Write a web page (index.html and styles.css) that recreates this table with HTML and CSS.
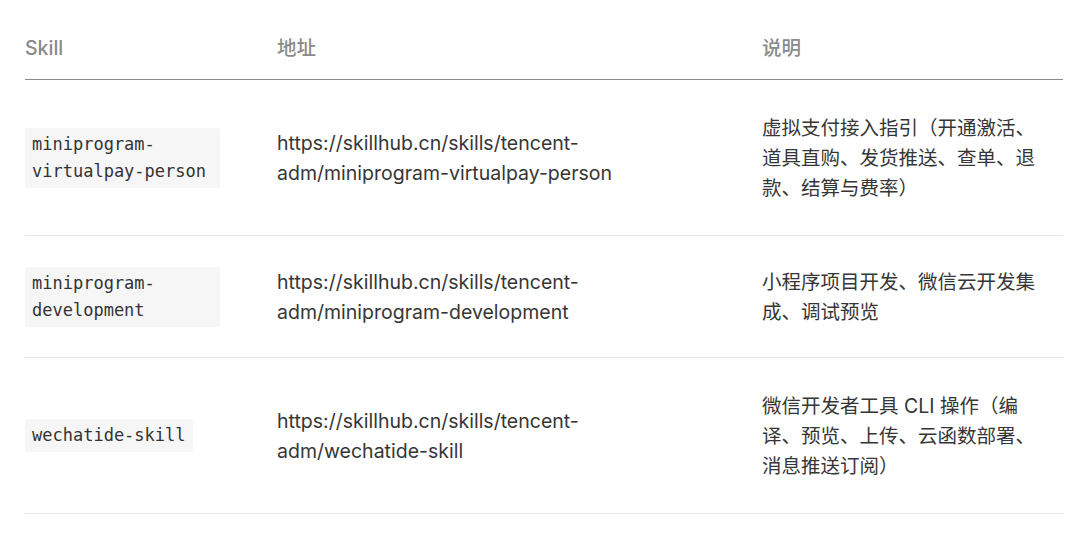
FILE: index.html
```html
<!DOCTYPE html>
<html lang="zh-CN">
<head>
<meta charset="utf-8">
<title>Skills</title>
<link rel="stylesheet" href="styles.css">
</head>
<body>
<table class="skills">
  <thead>
    <tr>
      <th class="col-skill">Skill</th>
      <th class="col-url">地址</th>
      <th class="col-desc">说明</th>
    </tr>
  </thead>
  <tbody>
    <tr>
      <td class="col-skill"><code class="code">miniprogram-virtualpay-person</code></td>
      <td class="col-url">https://skillhub.cn/skills/tencent-adm/miniprogram-virtualpay-person</td>
      <td class="col-desc">虚拟支付接入指引（开通激活、道具直购、发货推送、查单、退款、结算与费率）</td>
    </tr>
    <tr class="row-short">
      <td class="col-skill"><code class="code">miniprogram-development</code></td>
      <td class="col-url">https://skillhub.cn/skills/tencent-adm/miniprogram-development</td>
      <td class="col-desc">小程序项目开发、微信云开发集成、调试预览</td>
    </tr>
    <tr>
      <td class="col-skill"><code class="code">wechatide-skill</code></td>
      <td class="col-url">https://skillhub.cn/skills/tencent-adm/wechatide-skill</td>
      <td class="col-desc">微信开发者工具 CLI 操作（编译、预览、上传、云函数部署、消息推送订阅）</td>
    </tr>
  </tbody>
</table>
</body>
</html>
```

FILE: styles.css
```css
html, body {
  margin: 0;
  padding: 0;
  background: #ffffff;
}

body {
  padding: 0 17px 0 25px;
  font-family: "Inter", "Noto Sans CJK SC", sans-serif;
  font-size: 19.5px;
  color: #363636;
}

.skills {
  width: 1038px;
  border-collapse: collapse;
  table-layout: fixed;
}

.skills th,
.skills td {
  box-sizing: border-box;
  text-align: left;
  vertical-align: middle;
  padding: 0 12px 0 0;
  line-height: 30px;
}

.skills th {
  font-weight: 500;
  color: #8a8a8a;
  padding-top: 33px;
  padding-bottom: 16px;
  border-bottom: 1px solid #8c8c8c;
}

.skills td {
  padding-top: 32.5px;
  padding-bottom: 32.5px;
  border-bottom: 1px solid #e6e6e6;
}

.skills .row-short td {
  padding-top: 30.5px;
  padding-bottom: 30.5px;
}

.skills .col-skill { width: 252px; padding-right: 57px; }
.skills .col-url { width: 485px; padding-right: 45px; }
.skills .col-desc { width: 301px; padding-right: 12px; }

.code {
  display: inline-block;
  font-family: "DejaVu Sans Mono", monospace;
  font-size: 17px;
  line-height: 27px;
  padding: 3px 7px;
  background: #f6f6f6;
  border-radius: 3px;
  color: #333333;
  vertical-align: middle;
}
```
